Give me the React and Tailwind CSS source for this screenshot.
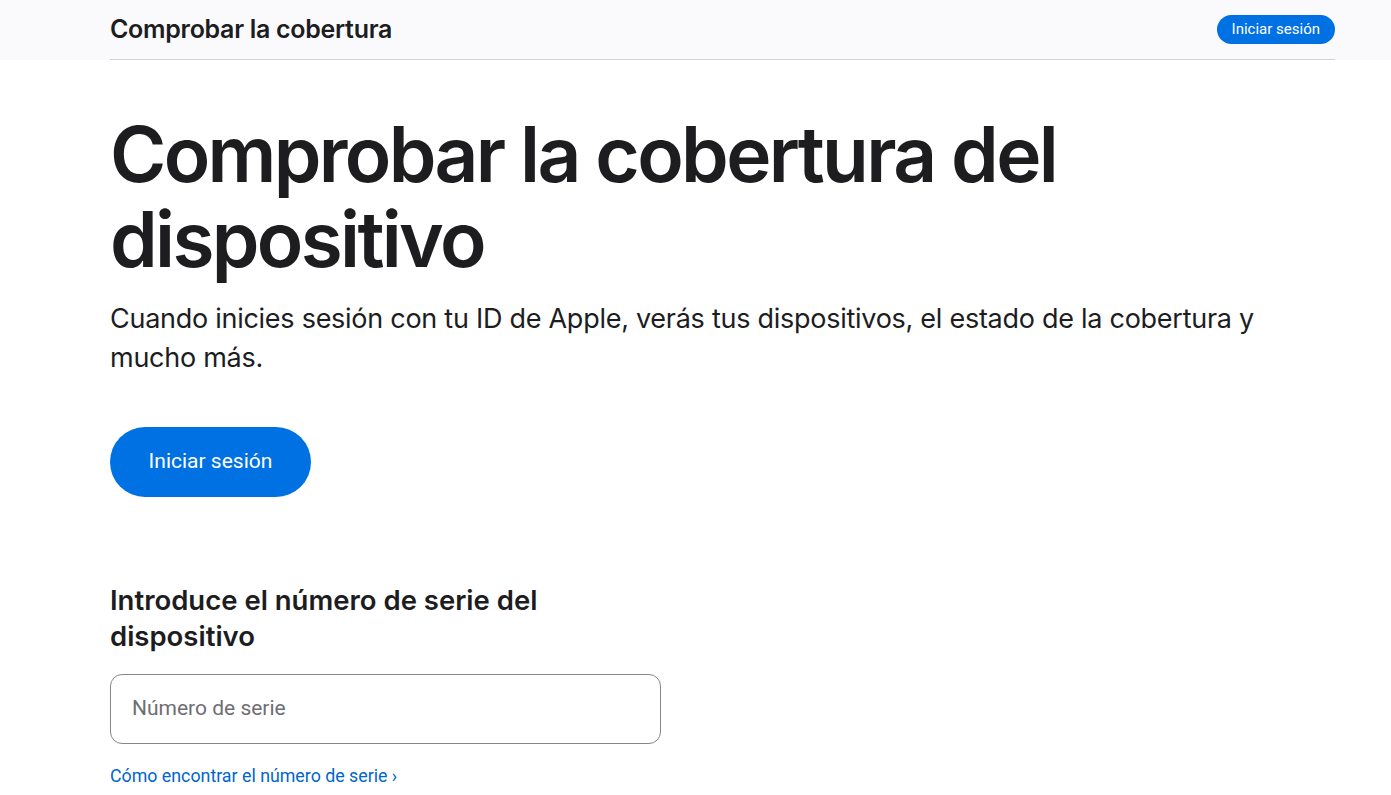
import React from 'react';

function App() {
  return (
    <div className="min-h-screen bg-white text-[#1d1d1f] font-['Inter',sans-serif]">
      <header className="bg-[#fafafc]">
        <div className="ml-[110px] mr-[56px] h-[60px] flex items-center justify-between border-b border-[#d2d2d7]">
          <span className="text-[25px] font-semibold tracking-[-0.012em]">Comprobar la cobertura</span>
          <button className="h-[29px] px-[15px] rounded-full bg-[#0071e3] text-white text-[15px] font-['Roboto',sans-serif]">
            Iniciar sesión
          </button>
        </div>
      </header>

      <main className="px-[110px]">
        <h1 className="mt-[52px] text-[76.5px] leading-[85px] font-semibold tracking-[-0.035em]">
          Comprobar la cobertura del
          <br />
          dispositivo
        </h1>
        <p className="mt-[17px] text-[27px] leading-[39px] tracking-[-0.01em] max-w-[1160px]">
          Cuando inicies sesión con tu ID de Apple, verás tus dispositivos, el estado de la cobertura y mucho más.
        </p>
        <button className="mt-[50px] w-[201px] h-[70px] rounded-full bg-[#0071e3] text-white text-[21px] font-['Roboto',sans-serif]">
          Iniciar sesión
        </button>

        <h2 className="mt-[85px] text-[27.5px] leading-[36px] font-semibold max-w-[460px]">
          Introduce el número de serie del dispositivo
        </h2>
        <div className="mt-[20px] w-[551px] h-[70px] rounded-[12px] border border-[#86868b] flex items-center px-[21px]">
          <input
            className="w-full outline-none text-[21px] font-['Roboto',sans-serif] placeholder:text-[#6e6e73]"
            placeholder="Número de serie"
          />
        </div>
        <a href="#" className="mt-[19px] inline-block text-[17.8px] text-[#0066cc] font-['Roboto',sans-serif]">
          Cómo encontrar el número de serie ›
        </a>
      </main>
    </div>
  );
}

export default App;
